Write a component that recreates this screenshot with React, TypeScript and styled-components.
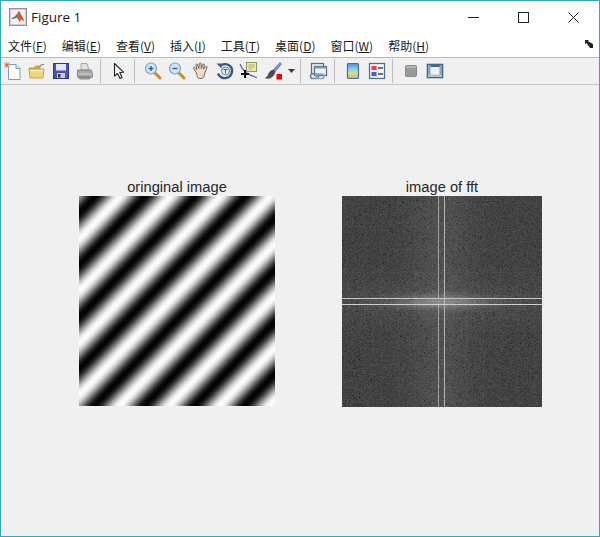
import React, { useEffect, useRef } from 'react'
import styled, { createGlobalStyle } from 'styled-components'

const GlobalStyle = createGlobalStyle`
  html, body {
    margin: 0;
    padding: 0;
    background: #f0f0f0;
  }
`

const Window = styled.div`
  box-sizing: border-box;
  width: 600px;
  height: 537px;
  border: 1px solid #2fa8c6;
  display: flex;
  flex-direction: column;
  background: #f0f0f0;
  overflow: hidden;
`

const TitleBar = styled.div`
  height: 32px;
  background: #fff;
  display: flex;
  align-items: center;
  padding-left: 8px;
  flex-shrink: 0;
`

const TitleText = styled.span`
  margin-left: 4px;
  font: 13.5px 'Open Sans', 'Noto Sans', sans-serif;
  color: #1c1c1c;
`

const WindowControls = styled.div`
  margin-left: auto;
  display: flex;
  padding-right: 1px;
`

const ControlButton = styled.div`
  width: 50px;
  height: 32px;
  display: flex;
  align-items: center;
  justify-content: center;
`

const MenuBar = styled.div`
  height: 24px;
  background: #fff;
  display: flex;
  align-items: center;
  padding-left: 7px;
  gap: 15px;
  position: relative;
  flex-shrink: 0;
`

const MenuItem = styled.span`
  font: 12px 'Noto Sans CJK SC', 'Noto Sans', sans-serif;
  color: #1a1a1a;
  white-space: nowrap;

  & u {
    text-underline-offset: 1px;
  }
`

const DockArrow = styled.svg`
  position: absolute;
  right: 5px;
  top: 7px;
`

const ToolBar = styled.div`
  height: 28px;
  box-sizing: border-box;
  border-top: 1px solid #b9b9b9;
  border-bottom: 1px solid #c4c4c4;
  background: #f0f0f0;
  display: flex;
  align-items: center;
  flex-shrink: 0;
`

const ToolButton = styled.div<{ $narrow?: boolean }>`
  width: ${({ $narrow }) => ($narrow ? '12px' : '24px')};
  height: 24px;
  display: flex;
  align-items: center;
  justify-content: center;
  flex-shrink: 0;
`

const Separator = styled.div`
  width: 1px;
  height: 24px;
  background: #bdbdbd;
  margin: 0 6px 0 3px;
  flex-shrink: 0;
`

const FigureArea = styled.div`
  flex: 1;
  display: flex;
  align-items: flex-start;
  padding: 93px 0 0 78px;
`

const Axes = styled.div<{ $width: number; $gap?: number }>`
  width: ${({ $width }) => $width}px;
  margin-left: ${({ $gap }) => $gap ?? 0}px;
  display: flex;
  flex-direction: column;
  align-items: center;
`

const AxesTitle = styled.div`
  font: 14.7px 'Liberation Sans', Arial, sans-serif;
  color: #262626;
  height: 18px;
  line-height: 18px;
  white-space: nowrap;
`

const Picture = styled.canvas<{ $width: number; $height: number }>`
  display: block;
  width: ${({ $width }) => $width}px;
  height: ${({ $height }) => $height}px;
`

const Icon = ({ children }: { children: React.ReactNode }) => (
  <svg width="20" height="20" viewBox="0 0 20 20">
    {children}
  </svg>
)

const MatlabLogo = () => (
  <svg width="18" height="18" viewBox="0 0 18 18">
    <rect x="0.5" y="0.5" width="17" height="17" fill="#c9ced6" stroke="#8a8f98" />
    <rect x="2" y="2" width="14" height="14" fill="#eef0f3" />
    <path d="M2 11 L6 8.5 L8 6 L10 2.5 L12 7 L15.5 13.5 L12.5 11 L10.5 14 L8 9.5 L5.5 10.5 Z" fill="#e0591c" />
    <path d="M2 11 L6 8.5 L8 6 L8 9.5 L5.5 10.5 Z" fill="#3f7fc0" />
    <path d="M10 2.5 L12 7 L15.5 13.5 L12.5 11 Z" fill="#c8401a" />
  </svg>
)

const NewIcon = () => (
  <Icon>
    <path d="M5.5 3.5 H13 L17 7.5 V18.5 H5.5 Z" fill="#fdfdf8" stroke="#7d9bb4" />
    <path d="M13 3.5 V7.5 H17" fill="#dfe8ef" stroke="#7d9bb4" />
    <rect x="1.5" y="1.5" width="5" height="5" fill="#ee9a7c" />
    <rect x="3" y="3" width="2" height="2" fill="#e2603c" />
  </Icon>
)

const OpenIcon = () => (
  <Icon>
    <path d="M2.5 7 H7 L8.5 5 H13 V8 H2.5 Z" fill="#d9b14a" stroke="#a98a35" strokeWidth="0.7" />
    <path d="M2 8 H17 L16 17 H3 Z" fill="#f2d47a" stroke="#b8963d" strokeWidth="0.8" />
    <path d="M3 9.5 H16" stroke="#fbeeb8" strokeWidth="1.4" />
    <path d="M13 5.5 C14 3.5 15.5 3 17 3.5" stroke="#7a8a99" fill="none" strokeWidth="1.2" />
  </Icon>
)

const SaveIcon = () => (
  <Icon>
    <rect x="2.5" y="2.5" width="15" height="15" fill="#4a55a8" stroke="#2f3a86" />
    <rect x="5" y="3" width="10" height="6.5" fill="#e4e6f2" />
    <rect x="6" y="12" width="8" height="5" fill="#c9cbd6" />
    <rect x="7" y="13" width="2.5" height="3.5" fill="#30355a" />
  </Icon>
)

const PrintIcon = () => (
  <Icon>
    <path d="M6 2.5 H12 L14 9 H6 Z" fill="#e2e2e2" stroke="#999" strokeWidth="0.8" />
    <path d="M2.5 9 H16.5 L17.5 14 V16 L14 18 H5 L2.5 16 Z" fill="#a8a8a8" stroke="#777" strokeWidth="0.8" />
    <path d="M3 13 H17" stroke="#d0d0d0" strokeWidth="1" />
    <path d="M4 16 H15" stroke="#6d6d6d" strokeWidth="1" />
  </Icon>
)

const ArrowIcon = () => (
  <Icon>
    <path d="M5.5 2.5 V15 L8.5 12.5 L11 17.5 L13 16.5 L10.8 11.5 L14.5 11.2 Z" fill="#f4f4f4" stroke="#222" strokeWidth="1.1" strokeLinejoin="round" />
  </Icon>
)

const ZoomIcon = ({ minus }: { minus?: boolean }) => (
  <Icon>
    <path d="M11 11 L17 17" stroke="#c98d2e" strokeWidth="3" strokeLinecap="round" />
    <circle cx="8" cy="7.5" r="5.5" fill="#cfe4f5" stroke="#7f9fbb" strokeWidth="1.2" />
    <path d="M5.5 7.5 H10.5" stroke="#2d5f8e" strokeWidth="1.4" />
    {!minus && <path d="M8 5 V10" stroke="#2d5f8e" strokeWidth="1.4" />}
  </Icon>
)

const HandIcon = () => (
  <Icon>
    <path
      d="M5 11 L2.5 7.5 C2 6.3 3.4 5.8 4.2 6.7 L5.7 8.5 L5 4 C4.9 2.8 6.4 2.6 6.7 3.8 L7.8 7.5 L8.3 2.8 C8.4 1.6 10 1.6 10.1 2.8 L10.3 7.5 L11.8 3.5 C12.2 2.4 13.6 2.8 13.3 4 L12.5 8.2 L14.6 5.6 C15.4 4.8 16.6 5.6 16 6.6 L13.8 12 C13.3 15 12.5 17.5 10 17.5 H8.2 C6.4 17.5 6 14 5 11 Z"
      fill="#f7dcc3"
      stroke="#5f5a55"
      strokeWidth="0.9"
    />
  </Icon>
)

const RotateIcon = () => (
  <Icon>
    <path d="M5 5 C8 2.2 13.5 2.5 16 6 C18.5 10 16.5 16 11 17 C7.5 17.7 4 15.5 3 12.5" fill="none" stroke="#3f5a78" strokeWidth="2.4" />
    <path d="M1.5 2.5 H6.5 V7.5 Z" fill="#3f5a78" />
    <circle cx="10.5" cy="10" r="4" fill="#e4e9ef" stroke="#64809c" strokeWidth="1" />
    <path d="M8.5 8.5 H12.5 M10.5 8.5 V12.5" stroke="#3f5a78" strokeWidth="1" />
  </Icon>
)

const DataCursorIcon = () => (
  <Icon>
    <path d="M1 3 C3 9 8 14 18 16.5" fill="none" stroke="#5a55c8" strokeWidth="1.1" />
    <rect x="7.5" y="1.5" width="10" height="9" fill="#f0e9ae" stroke="#97935f" />
    <path d="M9.5 4 H15.5 M9.5 6 H15.5 M9.5 8 H13" stroke="#a8a46e" strokeWidth="0.9" />
    <path d="M6 9 V17 M2 13 H10" stroke="#111" strokeWidth="2" />
  </Icon>
)

const BrushIcon = () => (
  <Icon>
    <path d="M17 1.5 L10 9 L12 11 L18.5 3 Z" fill="#7f8fc6" stroke="#566499" strokeWidth="0.6" />
    <path d="M10 9 C7 10 6.5 11 5.5 13.5 C5 15 4 16 2.5 17 C6 18 10.5 16.5 12 11 Z" fill="#4d4d4d" stroke="#2f2f2f" strokeWidth="0.6" />
    <rect x="13.5" y="13" width="5.5" height="5.5" fill="#f0000c" />
  </Icon>
)

const CaretIcon = () => (
  <svg width="7" height="4" viewBox="0 0 7 4">
    <path d="M0 0 H7 L3.5 4 Z" fill="#3a3a3a" />
  </svg>
)

const LinkIcon = () => (
  <Icon>
    <rect x="2.5" y="2.5" width="12" height="10" fill="#e2e8ef" stroke="#4f6b89" strokeWidth="1.2" />
    <rect x="5.5" y="5.5" width="12" height="9" fill="#eef2f6" stroke="#4f6b89" strokeWidth="1.2" />
    <rect x="5.5" y="5.5" width="12" height="2" fill="#7d95ae" />
    <rect x="1.5" y="13" width="8" height="4.5" rx="2.2" fill="none" stroke="#6d88a3" strokeWidth="1.6" />
    <rect x="7" y="13" width="8" height="4.5" rx="2.2" fill="none" stroke="#8ba2b8" strokeWidth="1.6" />
  </Icon>
)

const ColorbarIcon = () => (
  <Icon>
    <defs>
      <linearGradient id="cbar" x1="0" y1="0" x2="0" y2="1">
        <stop offset="0" stopColor="#5f86d8" />
        <stop offset="0.35" stopColor="#7fd0e8" />
        <stop offset="0.65" stopColor="#c9e59a" />
        <stop offset="1" stopColor="#f2a070" />
      </linearGradient>
    </defs>
    <rect x="4.5" y="2.5" width="11" height="15" rx="1" fill="url(#cbar)" stroke="#4e6c8e" strokeWidth="1.2" />
  </Icon>
)

const LegendIcon = () => (
  <Icon>
    <rect x="2.5" y="2.5" width="15" height="15" fill="#f0f2f6" stroke="#4e6c8e" strokeWidth="1.2" />
    <rect x="4.5" y="5" width="5" height="4" fill="#e8424a" />
    <rect x="4.5" y="11" width="5" height="4" fill="#5058d8" />
    <path d="M11 7 H16 M11 13 H16" stroke="#4a4a4a" strokeWidth="1.3" />
  </Icon>
)

const HideIcon = () => (
  <Icon>
    <rect x="4.5" y="4.5" width="11" height="11" rx="1" fill="#9a9a9a" stroke="#8a8a8a" />
    <rect x="5" y="5" width="10" height="2" fill="#b4b4b4" />
  </Icon>
)

const ShowIcon = () => (
  <Icon>
    <rect x="2.5" y="3.5" width="15" height="13" fill="#eef1f4" stroke="#48658a" strokeWidth="1.6" />
    <rect x="3" y="4" width="14" height="2" fill="#48658a" />
    <rect x="3" y="4" width="2.5" height="12" fill="#8ea2b8" />
    <rect x="14.5" y="4" width="2.5" height="12" fill="#8ea2b8" />
    <rect x="3" y="13.5" width="14" height="2.5" fill="#b6c0ca" />
  </Icon>
)

// gray sinusoid sampled on a coarse grid, the browser smooths it when scaled up
const drawStripes = (canvas: HTMLCanvasElement) => {
  const ctx = canvas.getContext('2d')
  if (!ctx) return
  const size = canvas.width
  const img = ctx.createImageData(size, canvas.height)
  for (let j = 0; j < canvas.height; j++) {
    for (let i = 0; i < size; i++) {
      const x = ((i + 0.5) / size) * 196
      const y = ((j + 0.5) / canvas.height) * 210
      const v = Math.round(127.5 + 127.5 * Math.cos(2 * Math.PI * ((x - 41.7) / 50 + y / 52)))
      const k = (j * size + i) * 4
      img.data[k] = v
      img.data[k + 1] = v
      img.data[k + 2] = v
      img.data[k + 3] = 255
    }
  }
  ctx.putImageData(img, 0, 0)
}

// log spectrum look: noise floor plus the cross lines through the centre
const drawSpectrum = (canvas: HTMLCanvasElement) => {
  const ctx = canvas.getContext('2d')
  if (!ctx) return
  const w = canvas.width
  const h = canvas.height
  const img = ctx.createImageData(w, h)
  let seed = 12345
  const rand = () => {
    seed = (seed * 1664525 + 1013904223) % 4294967296
    return seed / 4294967296
  }
  const cx = 99
  const cy = 105.5
  for (let y = 0; y < h; y++) {
    for (let x = 0; x < w; x++) {
      const dx = x - cx
      const dy = y - cy
      let v = 66 + (rand() - 0.5) * 24
      if (rand() < 0.015) v -= 28
      v += 14 * Math.exp(-(dx * dx) / 900)
      v += 8 * Math.exp(-(dy * dy) / 500)
      v += 50 * Math.exp(-(dx * dx) / 2500 - (dy * dy) / 40)
      if (x % 17 === 5) v += 4
      if (y % 23 === 7) v += 4
      if (Math.abs(x - 96) < 1) v = 150 + rand() * 20
      if (Math.abs(x - 102) < 1) v = 170 + rand() * 20
      if (Math.abs(y - 102) < 1) v = 190 + rand() * 15
      if (Math.abs(y - 108) < 1) v = 200 + rand() * 15
      const k = (y * w + x) * 4
      img.data[k] = v
      img.data[k + 1] = v
      img.data[k + 2] = v
      img.data[k + 3] = 255
    }
  }
  ctx.putImageData(img, 0, 0)
}

const Plot = ({
  draw,
  gridWidth,
  gridHeight,
  width,
  height,
}: {
  draw: (c: HTMLCanvasElement) => void
  gridWidth: number
  gridHeight: number
  width: number
  height: number
}) => {
  const ref = useRef<HTMLCanvasElement>(null)
  useEffect(() => {
    if (ref.current) draw(ref.current)
  }, [draw])
  return <Picture ref={ref} width={gridWidth} height={gridHeight} $width={width} $height={height} />
}

const menus: [string, string][] = [
  ['文件', 'F'],
  ['编辑', 'E'],
  ['查看', 'V'],
  ['插入', 'I'],
  ['工具', 'T'],
  ['桌面', 'D'],
  ['窗口', 'W'],
  ['帮助', 'H'],
]

const App = () => (
  <Window>
    <GlobalStyle />
    <TitleBar>
      <MatlabLogo />
      <TitleText>Figure 1</TitleText>
      <WindowControls>
        <ControlButton>
          <svg width="11" height="11" viewBox="0 0 11 11">
            <path d="M0 5.5 H11" stroke="#222" />
          </svg>
        </ControlButton>
        <ControlButton>
          <svg width="11" height="11" viewBox="0 0 11 11">
            <rect x="0.5" y="0.5" width="10" height="10" fill="none" stroke="#222" />
          </svg>
        </ControlButton>
        <ControlButton>
          <svg width="11" height="11" viewBox="0 0 11 11">
            <path d="M0.5 0.5 L10.5 10.5 M10.5 0.5 L0.5 10.5" stroke="#222" />
          </svg>
        </ControlButton>
      </WindowControls>
    </TitleBar>
    <MenuBar>
      {menus.map(([label, key]) => (
        <MenuItem key={key}>
          {label}(<u>{key}</u>)
        </MenuItem>
      ))}
      <DockArrow width="9" height="8" viewBox="0 0 9 8">
        <path d="M0 0 H4 L3 1.2 L8 4 V8 H5 L1.5 3 L0 4 Z" fill="#222" />
      </DockArrow>
    </MenuBar>
    <ToolBar>
      <ToolButton><NewIcon /></ToolButton>
      <ToolButton><OpenIcon /></ToolButton>
      <ToolButton><SaveIcon /></ToolButton>
      <ToolButton><PrintIcon /></ToolButton>
      <Separator />
      <ToolButton><ArrowIcon /></ToolButton>
      <Separator />
      <ToolButton><ZoomIcon /></ToolButton>
      <ToolButton><ZoomIcon minus /></ToolButton>
      <ToolButton><HandIcon /></ToolButton>
      <ToolButton><RotateIcon /></ToolButton>
      <ToolButton><DataCursorIcon /></ToolButton>
      <ToolButton><BrushIcon /></ToolButton>
      <ToolButton $narrow><CaretIcon /></ToolButton>
      <Separator />
      <ToolButton><LinkIcon /></ToolButton>
      <Separator />
      <ToolButton><ColorbarIcon /></ToolButton>
      <ToolButton><LegendIcon /></ToolButton>
      <Separator />
      <ToolButton><HideIcon /></ToolButton>
      <ToolButton><ShowIcon /></ToolButton>
    </ToolBar>
    <FigureArea>
      <Axes $width={196}>
        <AxesTitle>oringinal image</AxesTitle>
        <Plot draw={drawStripes} gridWidth={64} gridHeight={64} width={196} height={210} />
      </Axes>
      <Axes $width={200} $gap={67}>
        <AxesTitle>image of fft</AxesTitle>
        <Plot draw={drawSpectrum} gridWidth={200} gridHeight={211} width={200} height={211} />
      </Axes>
    </FigureArea>
  </Window>
)

export default App
